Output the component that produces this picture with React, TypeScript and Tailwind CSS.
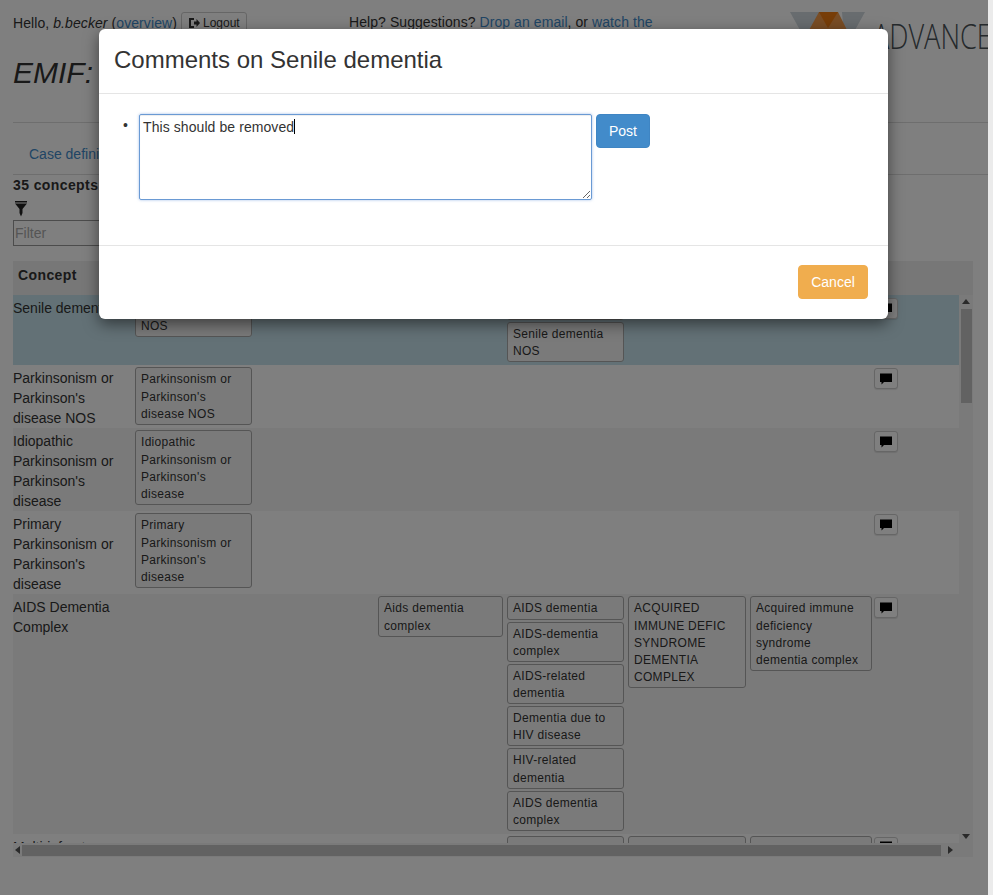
const font = { fontFamily: '"Liberation Sans", Arial, sans-serif' };

const Chip = ({ text }: { text: string }) => (
  <div className="mb-[2px] rounded-[3px] border border-[#aaa] bg-[#f5f5f5] px-[5px] pt-[3px] pb-[1px] text-[12px] leading-[17.14px] tracking-[0.3px] text-[#333]">
    {text}
  </div>
);

const CommentIcon = () => (
  <svg width="14" height="14" viewBox="0 0 14 14" className="fill-black">
    <path d="M1 1.5h12v8.5H5l-2.500 2.600V10H1z" />
  </svg>
);

const CommentButton = () => (
  <button className="mt-[3px] flex h-[21px] w-[24px] items-center justify-center rounded-[3px] border border-[#ccc] bg-white shadow-[0_1px_1px_rgba(0,0,0,0.1)]">
    <CommentIcon />
  </button>
);

type Row = { concept: string; cols: string[][]; bg: string };

const rows: Row[] = [
  {
    concept: "Senile dementia",
    bg: "bg-[#c6e3ec]",
    cols: [["Senile dementia NOS"], [], [], ["Senile dementia", "Senile dementia NOS"], [], []],
  },
  {
    concept: "Parkinsonism or Parkinson's disease NOS",
    bg: "bg-white",
    cols: [["Parkinsonism or Parkinson's disease NOS"], [], [], [], [], []],
  },
  {
    concept: "Idiopathic Parkinsonism or Parkinson's disease",
    bg: "bg-[#f5f5f5]",
    cols: [["Idiopathic Parkinsonism or Parkinson's disease"], [], [], [], [], []],
  },
  {
    concept: "Primary Parkinsonism or Parkinson's disease",
    bg: "bg-white",
    cols: [["Primary Parkinsonism or Parkinson's disease"], [], [], [], [], []],
  },
  {
    concept: "AIDS Dementia Complex",
    bg: "bg-[#f5f5f5]",
    cols: [
      [],
      [],
      ["Aids dementia complex"],
      [
        "AIDS dementia",
        "AIDS-dementia complex",
        "AIDS-related dementia",
        "Dementia due to HIV disease",
        "HIV-related dementia",
        "AIDS dementia complex",
      ],
      ["ACQUIRED IMMUNE DEFIC SYNDROME DEMENTIA COMPLEX"],
      ["Acquired immune deficiency syndrome dementia complex"],
    ],
  },
  {
    concept: "Multi-infarct dementia",
    bg: "bg-white",
    cols: [[], [], [], ["Multi-infarct dementia"], ["Multi-infarct dementia"], ["Multi-infarct dementia"]],
  },
];

const TableRow = ({ row }: { row: Row }) => (
  <div
    className={`grid grid-cols-[118px_117px_118px_125px_117px_118px_122px_24px] gap-x-[4px] items-start ${row.bg}`}
  >
    <div className="pt-[3px] text-[14px] leading-[20px] text-[#333]">{row.concept}</div>
    {row.cols.map((col, i) => (
      <div key={i} className="pt-[2px] pb-[1px]">
        {col.map((c) => (
          <Chip key={c} text={c} />
        ))}
      </div>
    ))}
    <div className="-ml-[2px]">
      <CommentButton />
    </div>
  </div>
);

const Arrow = ({ d }: { d: string }) => (
  <svg width="8" height="8" viewBox="0 0 8 8" className="fill-[#555]">
    <path d={d} />
  </svg>
);

const Logo = () => (
  <svg width="76" height="40" viewBox="0 0 76 40">
    <path d="M0 0h30L20 36z" fill="#d0d8de" />
    <path d="M52 0h23L55 36z" fill="#d0d8de" />
    <path d="M29 0h19l10 20H18z" fill="#f29a4a" />
    <path d="M29 0h19L38 16z" fill="#ee7a10" />
  </svg>
);

export default function App() {
  return (
    <div className="relative flex h-[895px] w-full overflow-hidden bg-[#ebebeb]" style={font}>
      {/* page behind the dialog */}
      <div className="h-full w-[988px] shrink-0 overflow-hidden bg-white">
        <div className="flex h-[110px] pl-[13px] text-[14px] text-[#333]">
          <div className="w-[336px] shrink-0">
            <div className="flex items-center pt-[12px]">
              <span className="leading-[20px] tracking-[0.08px]">
                Hello, <em>b.becker</em> (<a className="text-[#428bca] underline">overview</a>)
              </span>
              <span className="ml-[4px] flex h-[22px] items-center gap-[3px] rounded-[3px] border border-[#ccc] px-[6px] text-[12px]">
                <svg width="12" height="12" viewBox="0 0 12 12" className="fill-[#333]">
                  <path d="M1 1h5v2H3v6h3v2H1zM6 4.500h2.500V2L12 6l-3.500 4V7.500H6z" />
                </svg>
                Logout
              </span>
            </div>
            <h1 className="mt-[19px] text-[30px] leading-[40px] italic">EMIF:</h1>
          </div>
          <div className="w-[441px] shrink-0 pt-[12px] leading-[20px] tracking-[0.07px]">
            Help? Suggestions? <a className="text-[#428bca]">Drop an email</a>, or{" "}
            <a className="text-[#428bca]">watch the</a>
          </div>
          <div className="flex shrink-0 pt-[12px]">
            <Logo />
            <span
              className="mt-[3px] ml-[7px] origin-left scale-x-[0.775] text-[35px] leading-[42px] font-light text-[#4a5358]"
              style={{ fontFamily: '"Open Sans", sans-serif' }}
            >
              ADVANCE
            </span>
          </div>
        </div>
        <div className="mt-[12px] ml-[13px] border-t border-[#ddd]" />
        <div className="ml-[13px] h-[52px] border-b border-[#ddd] pt-[21px] pl-[16px] text-[14px] leading-[20px] text-[#428bca]">
          Case definition
        </div>
        <div className="pl-[13px]">
          <div className="text-[14px] leading-[20px] font-bold tracking-[0.4px] text-[#333]">35 concepts</div>
          <svg width="14" height="16" viewBox="0 0 14 16" className="mt-[6px] ml-[1px] fill-[#222]">
            <path d="M1 0h12v1.500H1zM1 2.500h12L8.500 8v4L7 15.500 5.500 12V8z" />
          </svg>
          <input
            placeholder="Filter"
            className="mt-[3px] block h-[26px] w-[200px] border border-[#999] px-[1px] text-[14px] placeholder:text-[#aaa]"
          />
          <div className="mt-[15px] w-[960px]">
            <div className="h-[34px] bg-[#eee] pt-[4px] pl-[5px] text-[14px] leading-[20px] font-bold tracking-[0.4px] text-[#333]">
              Concept
            </div>
            <div className="flex">
              <div className="h-[548px] w-[946px] overflow-hidden">
                {rows.map((r) => (
                  <TableRow key={r.concept} row={r} />
                ))}
              </div>
              <div className="flex h-[562px] w-[14px] flex-col items-center bg-[#f5f5f5]">
                <div className="flex h-[14px] items-center">
                  <Arrow d="M4 1l4 5H0z" />
                </div>
                <div className="h-[94px] w-[11px] bg-[#c4c4c4]" />
                <div className="flex-1" />
                <div className="mb-[14px] flex h-[14px] items-center">
                  <Arrow d="M0 2h8L4 7z" />
                </div>
              </div>
            </div>
            <div className="-mt-[14px] flex h-[14px] w-[946px] items-center bg-[#f5f5f5]">
              <div className="flex w-[9px] justify-center">
                <Arrow d="M6 0v8L1 4z" />
              </div>
              <div className="h-[11px] w-[919px] bg-[#c4c4c4]" />
              <div className="flex flex-1 justify-center">
                <Arrow d="M2 0v8l5-4z" />
              </div>
            </div>
          </div>
        </div>
      </div>

      {/* dialog backdrop */}
      <div className="absolute inset-y-0 left-0 flex w-[988px] items-start justify-center bg-black/50 pt-[29px]">
        <div className="mr-[1px] w-[789px] rounded-[6px] bg-white shadow-[0_5px_15px_rgba(0,0,0,0.5)]">
          <div className="h-[65px] border-b border-[#e5e5e5] px-[15px] pt-[15px] text-[24px] leading-[32px] text-[#333]">
            Comments on Senile dementia
          </div>
          <div className="flex h-[152px] items-start border-b border-[#e5e5e5] pt-[20px] pl-[24px]">
            <span className="w-[16px] pt-[1px] text-[14px] leading-[20px] text-[#333]">•</span>
            <div className="relative h-[86px] w-[453px]">
              <textarea
                defaultValue="This should be removed"
                className="h-[86px] w-[453px] rounded-[2px] border border-[#6a9ad4] px-[3px] py-[2px] text-[14px] leading-[20px] tracking-[0.08px] text-[#333] shadow-[inset_0_1px_1px_rgba(0,0,0,0.075),0_0_3px_rgba(102,150,220,0.6)] outline-none"
              />
              {/* text caret */}
              <div className="absolute top-[5px] left-[155px] h-[15px] w-px bg-black" />
            </div>
            <button className="ml-[4px] h-[34px] w-[54px] rounded-[4px] border border-[#3f85c3] bg-[#428bca] text-[14px] text-white">
              Post
            </button>
          </div>
          <div className="flex h-[73px] justify-end pt-[19px] pr-[20px]">
            <button className="h-[34px] w-[70px] rounded-[4px] border border-[#f0ad4e] bg-[#f0ad4e] text-[14px] text-white">
              Cancel
            </button>
          </div>
        </div>
      </div>
    </div>
  );
}
